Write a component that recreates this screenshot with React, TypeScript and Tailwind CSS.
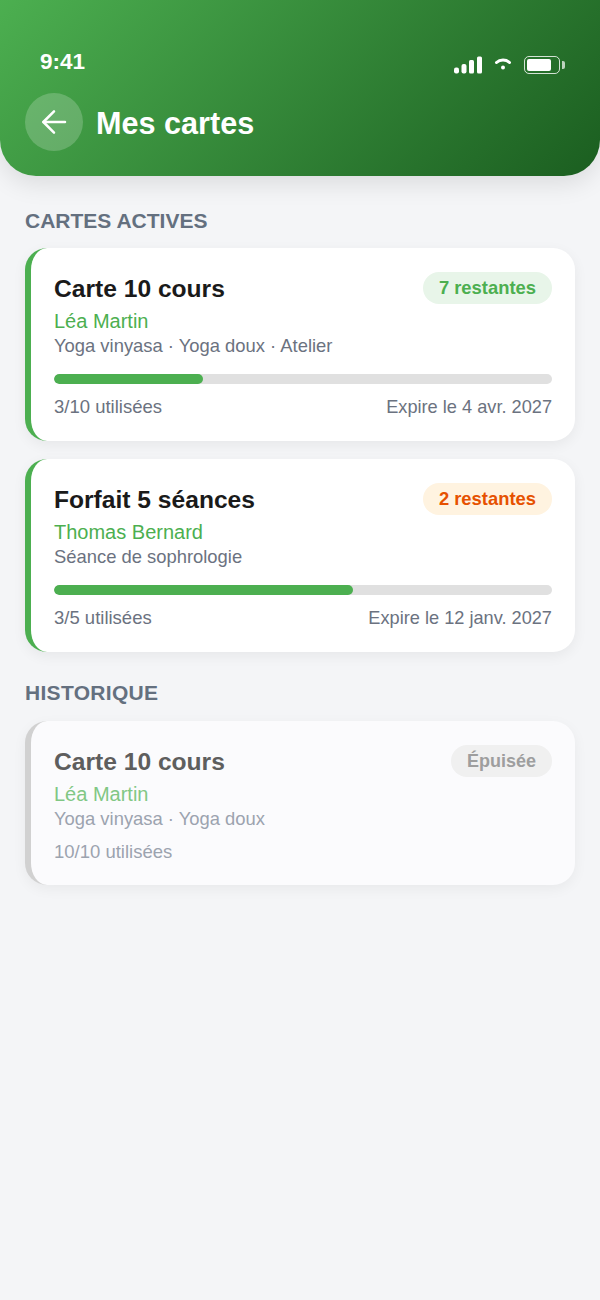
function StatusIcons() {
  return (
    <div className="flex items-center gap-[11px] pt-[7px]">
      <svg width="28" height="18" viewBox="0 0 28 18" fill="white">
        <rect x="0" y="11.5" width="5" height="6" rx="2" />
        <rect x="7.5" y="8" width="5" height="9.5" rx="2" />
        <rect x="15" y="4" width="5" height="13.5" rx="1.5" />
        <rect x="23" y="0.5" width="5" height="17" rx="1.5" />
      </svg>
      <svg width="20" height="16" viewBox="0 0 20 16" fill="none">
        <path d="M3.5 5.5C7 2.2 13 2.2 16.5 5.5" stroke="white" strokeWidth="3" strokeLinecap="round" />
        <circle cx="10" cy="10.5" r="2" fill="white" />
      </svg>
      <div className="flex items-center gap-[2px]">
        <div className="w-[36px] h-[18px] rounded-[5px] border-[1.5px] border-white/80 p-[2px]">
          <div className="w-[24px] h-full rounded-[2px] bg-white" />
        </div>
        <div className="w-[3px] h-[8px] rounded-r-[2px] bg-white/70" />
      </div>
    </div>
  );
}

type CardProps = {
  title: string;
  name: string;
  detail: string;
  badge: string;
  badgeClass: string;
  used: string;
  expire?: string;
  pct?: number;
  past?: boolean;
};

function Card({ title, name, detail, badge, badgeClass, used, expire, pct, past }: CardProps) {
  return (
    <div
      className={
        past
          ? "rounded-[22px] border-l-[6px] border-[#d1d1d1] bg-[#fbfbfd] px-[23px] pt-[24px] pb-[21px] shadow-[0_4px_14px_rgba(0,0,0,0.05)]"
          : "rounded-[22px] border-l-[6px] border-[#4caf50] bg-white px-[23px] pt-[24px] pb-[22px] shadow-[0_4px_14px_rgba(0,0,0,0.06)]"
      }
    >
      <div className="flex items-start justify-between">
        <div className={past ? "-mt-[1px] mb-[1px] text-[24.6px] leading-[36px] font-bold text-[#5e5e5e]" : "-mt-[1px] mb-[1px] text-[24.6px] leading-[36px] font-bold text-[#1a1a1a]"}>
          {title}
        </div>
        <div className={`h-[32px] rounded-full px-[16px] leading-[32px] font-bold ${badgeClass}`}>{badge}</div>
      </div>
      <div className={past ? "mt-[1px] text-[20px] leading-[25px] text-[#81c784]" : "mt-[1px] text-[20px] leading-[25px] text-[#4caf50]"}>{name}</div>
      <div className={past ? "text-[18.4px] leading-[24px] text-[#9ca3af]" : "text-[18.4px] leading-[24px] text-[#6b7280]"}>{detail}</div>
      {pct !== undefined && (
        <div className="mt-[16px] h-[10px] rounded-full bg-[#e0e0e0] overflow-hidden">
          <div className="h-full rounded-full bg-[#4caf50]" style={{ width: `${pct}%` }} />
        </div>
      )}
      <div className={past ? "mt-[9px] flex justify-between leading-[24px] text-[#9ca3af]" : "mt-[11px] flex justify-between leading-[24px] text-[#6b7280]"}>
        <span className="text-[18.5px]">{used}</span>
        {expire && <span className="text-[18.2px]">{expire}</span>}
      </div>
    </div>
  );
}

export default function App() {
  return (
    <div className="w-[600px] h-[1300px] bg-[#f4f5f7] overflow-hidden font-['Liberation_Sans',Arial,sans-serif]">
      <header className="h-[176px] rounded-b-[36px] bg-[linear-gradient(135deg,#4caf50_0%,#1b5e20_100%)] shadow-[0_8px_24px_rgba(0,0,0,0.10)] px-[25px] pt-[46px]">
        <div className="flex items-center justify-between pl-[15px] pr-[10px] h-[30px]">
          <span className="pt-[2px] text-[22.5px] font-bold text-white">9:41</span>
          <StatusIcons />
        </div>
        <div className="mt-[17px] flex items-center gap-[13px]">
          <div className="w-[58px] h-[58px] rounded-full bg-white/20 flex items-center justify-center">
            <svg width="30" height="30" viewBox="0 0 24 24" fill="none" stroke="white" strokeWidth="2" strokeLinecap="round" strokeLinejoin="round">
              <path d="M20.8 12H3.6" />
              <path d="M12 3.5L3.5 12l8.5 8.5" />
            </svg>
          </div>
          <h1 className="text-[30.6px] leading-[40px] pt-[2px] font-bold text-white">Mes cartes</h1>
        </div>
      </header>
      <main className="px-[25px]">
        <h2 className="mt-[31px] mb-[13px] text-[21px] leading-[28px] font-bold text-[#64707f]">CARTES ACTIVES</h2>
        <div className="flex flex-col gap-[18px]">
          <Card title="Carte 10 cours" name="Léa Martin" detail="Yoga vinyasa · Yoga doux · Atelier" badge="7 restantes" badgeClass="text-[18.4px] bg-[#e8f5e9] text-[#4caf50]" used="3/10 utilisées" expire="Expire le 4 avr. 2027" pct={30} />
          <Card title="Forfait 5 séances" name="Thomas Bernard" detail="Séance de sophrologie" badge="2 restantes" badgeClass="text-[18.4px] bg-[#fff3e0] text-[#e65100]" used="3/5 utilisées" expire="Expire le 12 janv. 2027" pct={60} />
        </div>
        <h2 className="mt-[27px] mb-[14px] text-[21px] leading-[28px] font-bold tracking-[0.3px] text-[#64707f]">HISTORIQUE</h2>
        <Card past title="Carte 10 cours" name="Léa Martin" detail="Yoga vinyasa · Yoga doux" badge="Épuisée" badgeClass="text-[18px] bg-[#f0f0f0] text-[#9e9e9e]" used="10/10 utilisées" />
      </main>
    </div>
  );
}
